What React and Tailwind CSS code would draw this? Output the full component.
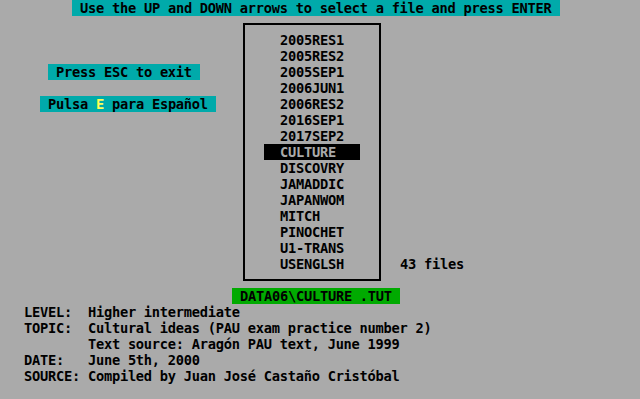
import React from "react";

const files = [
  "2005RES1",
  "2005RES2",
  "2005SEP1",
  "2006JUN1",
  "2006RES2",
  "2016SEP1",
  "2017SEP2",
  "CULTURE",
  "DISCOVRY",
  "JAMADDIC",
  "JAPANWOM",
  "MITCH",
  "PINOCHET",
  "U1-TRANS",
  "USENGLSH",
];

function T({ children, className = "" }) {
  return <span className={"whitespace-pre " + className}>{children}</span>;
}

export default function App() {
  return (
    <div className="w-[640px] h-[399px] overflow-hidden bg-[#aaaaaa] text-black font-['DejaVu_Sans_Mono','Liberation_Mono',monospace] font-bold text-[13.7px] leading-[16px] tracking-[-0.25px]">
      {/* top instruction bar */}
      <div className="ml-[72px] w-[488px] h-4 bg-[#00aaaa] pl-2">
        <T>Use the UP and DOWN arrows to select a file and press ENTER</T>
      </div>

      {/* middle section */}
      <div className="flex h-[272px]">
        <div className="w-[243px] flex flex-col">
          <div className="mt-[48px] ml-[48px] w-[152px] h-4 bg-[#00aaaa] pl-2">
            <T>Press ESC to exit</T>
          </div>
          <div className="mt-4 ml-[40px] w-[176px] h-4 bg-[#00aaaa] pl-2">
            <T>
              Pulsa <span className="text-[#ffff55]">E</span> para Español
            </T>
          </div>
        </div>

        <div className="mt-[7px] w-[138px] h-[258px] border-2 border-black pt-[7px] pl-[19px]">
          {files.map((f) => (
            <div
              key={f}
              className={
                "w-[96px] h-4 pl-4 " +
                (f === "CULTURE" ? "bg-black text-[#aaaaaa]" : "")
              }
            >
              <T>{f}</T>
            </div>
          ))}
        </div>

        <div className="ml-[19px] mt-[240px] h-4">
          <T>43 files</T>
        </div>
      </div>

      {/* current path bar */}
      <div className="ml-[232px] w-[168px] h-4 bg-[#00aa00] pl-2">
        <T>{"DATA06\\CULTURE .TUT"}</T>
      </div>

      {/* info */}
      <div className="ml-[24px] flex flex-col">
        <div className="h-4"><T>{"LEVEL:  Higher intermediate"}</T></div>
        <div className="h-4"><T>{"TOPIC:  Cultural ideas (PAU exam practice number 2)"}</T></div>
        <div className="h-4"><T>{"        Text source: Aragón PAU text, June 1999"}</T></div>
        <div className="h-4"><T>{"DATE:   June 5th, 2000"}</T></div>
        <div className="h-4"><T>{"SOURCE: Compiled by Juan José Castaño Cristóbal"}</T></div>
      </div>
    </div>
  );
}
